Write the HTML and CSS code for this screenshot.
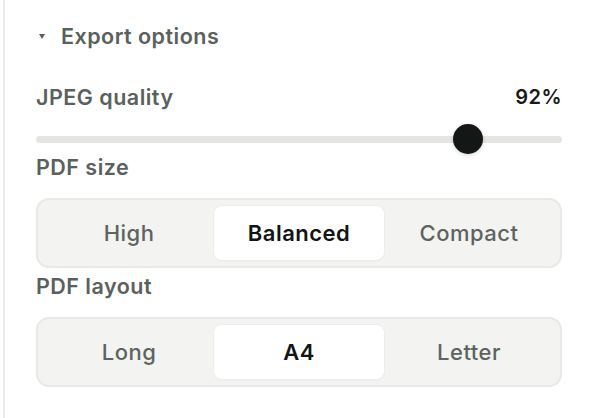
FILE: index.html
```html
<!DOCTYPE html>
<html lang="en">
<head>
	<meta charset="UTF-8">
	<title>Export options</title>
	<link rel="stylesheet" href="styles.css">
</head>
<body>
	<div class="panel">
		<div class="section-head">
			<span class="caret"></span>
			<span class="section-title">Export options</span>
		</div>

		<div class="field-row">
			<span class="label">JPEG quality</span>
			<span class="value">92%</span>
		</div>
		<input class="slider" type="range" min="50" max="100" value="92">

		<div class="label label-block">PDF size</div>
		<ul class="segmented">
			<li>High</li>
			<li class="on">Balanced</li>
			<li>Compact</li>
		</ul>

		<div class="label label-block label-tight">PDF layout</div>
		<ul class="segmented">
			<li>Long</li>
			<li class="on">A4</li>
			<li>Letter</li>
		</ul>
	</div>
</body>
</html>
```

FILE: styles.css
```css
body,ul,li{margin: 0;padding: 0;}
ul,li{list-style: none}
body{background: #fff;font-family: Inter, "Noto Sans", sans-serif;color: #5a615d;letter-spacing: .03em;}

.panel{margin-left: 3px;border-left: 2px solid #ebebe7;height: 418px;box-sizing: border-box;padding: 22px 32px 0 31px;}

.section-head{display: flex;align-items: center;height: 28px;}
.caret{width: 0;height: 0;border-left: 3.5px solid transparent;border-right: 3.5px solid transparent;border-top: 5px solid #5a615d;margin: 0 16px 0 3px;}
.section-title{font-size: 21.5px;font-weight: 600;line-height: 28px;}

.label{font-size: 21.5px;font-weight: 600;line-height: 24px;}
.field-row{display: flex;justify-content: space-between;margin-top: 35px;}
.value{font-size: 20px;font-weight: 600;line-height: 24px;color: #161a19;}

.slider{-webkit-appearance: none;appearance: none;display: block;width: 100%;height: 30px;margin: 15px 0 0;background: transparent;}
.slider::-webkit-slider-runnable-track{height: 7px;border-radius: 4px;background: #e5e5e1;}
.slider::-webkit-slider-thumb{-webkit-appearance: none;width: 30px;height: 30px;margin-top: -11.5px;border-radius: 50%;background: #131716;box-shadow: 0 1px 4px rgba(0,0,0,.18);}

.label-block{margin-top: 1px;}
.label-tight{margin-top: 6px;}

.segmented{display: flex;margin-top: 19px;height: 70px;box-sizing: border-box;padding: 6px;border: 2px solid #e8e8e4;border-radius: 13px;background: #f3f3f1;}
.segmented li{flex: 1;display: flex;align-items: center;justify-content: center;font-size: 22px;font-weight: 500;border-radius: 8px;color: #5d6460;}
.segmented li.on{background: #fff;color: #111514;font-weight: 600;box-shadow: 0 0 0 1px #ededea, 0 1px 2px rgba(0,0,0,.05);}
```
